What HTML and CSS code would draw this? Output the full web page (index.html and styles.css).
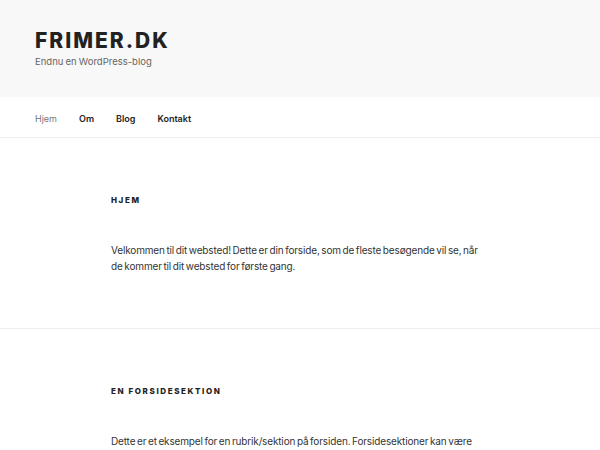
FILE: index.html
```html
<!DOCTYPE html>
<html lang="da">
<head>
<meta charset="utf-8">
<title>Frimer.dk</title>
<link rel="stylesheet" href="styles.css">
</head>
<body>
<header class="site-header">
  <div class="branding">
    <h1 class="site-title">FRIMER.DK</h1>
    <p class="site-desc">Endnu en WordPress-blog</p>
  </div>
</header>
<nav class="nav">
  <ul class="menu">
    <li><a class="current" href="#">Hjem</a></li>
    <li><a href="#">Om</a></li>
    <li><a href="#">Blog</a></li>
    <li><a href="#">Kontakt</a></li>
  </ul>
</nav>
<main>
  <section class="panel first">
    <h2 class="entry-title">Hjem</h2>
    <p class="entry-text">Velkommen til dit websted! Dette er din forside, som de fleste besøgende vil se, når de kommer til dit websted for første gang.</p>
  </section>
  <section class="panel second">
    <h2 class="entry-title">En forsidesektion</h2>
    <p class="entry-text">Dette er et eksempel for en rubrik/sektion på forsiden. Forsidesektioner kan være</p>
  </section>
</main>
</body>
</html>
```
FILE: styles.css
```css
html, body {
  margin: 0;
  padding: 0;
}
body {
  font-family: Inter, "Liberation Sans", sans-serif;
  color: #333;
  background: #fff;
  overflow: hidden;
}
.site-header {
  background: #f8f8f8;
  height: 97px;
  box-sizing: border-box;
  padding: 29px 35px 0;
}
.site-title {
  margin: 0;
  font-size: 21px;
  line-height: 24px;
  font-weight: 800;
  letter-spacing: 0.095em;
  color: #222;
}
.site-desc {
  margin: 2px 0 0;
  font-size: 9.5px;
  line-height: 14px;
  word-spacing: -0.5px;
  color: #666;
}
.nav {
  height: 41px;
  border-bottom: 1px solid #eee;
  box-sizing: border-box;
}
.menu {
  list-style: none;
  margin: 0;
  padding: 0 0 2px 35px;
  display: flex;
  gap: 22px;
  height: 40px;
  box-sizing: border-box;
  align-items: center;
}
.menu a {
  font-size: 9px;
  font-weight: 600;
  color: #222;
  text-decoration: none;
}
.menu a.current {
  color: #767676;
  font-weight: 400;
}
.panel {
  padding: 0 0 0 111px;
}
.panel.first {
  padding-top: 56px;
  height: 191px;
  border-bottom: 1px solid #eee;
  box-sizing: border-box;
}
.panel.second {
  padding-top: 56px;
}
.entry-title {
  margin: 0;
  font-size: 8px;
  line-height: 12px;
  font-weight: 800;
  letter-spacing: 0.2em;
  text-transform: uppercase;
  color: #222;
}
.entry-text {
  margin: 36px 0 0;
  width: 380px;
  font-size: 10px;
  line-height: 16px;
  word-spacing: -1px;
  letter-spacing: -0.15px;
  color: #333;
}
```
